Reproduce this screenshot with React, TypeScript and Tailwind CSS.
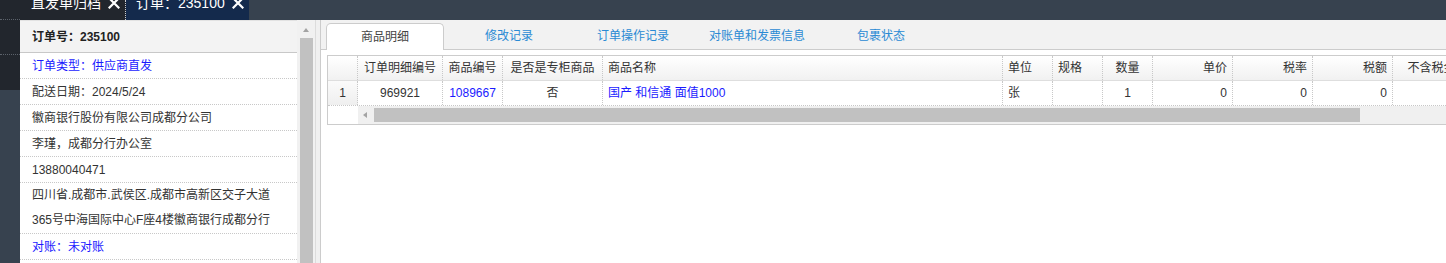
import React from 'react';

type Col = {
  w: string;
  title: string;
  head: string;
  cell: string;
  value: string;
  blue?: boolean;
};

const columns: Col[] = [
  { w: 'w-[85px]', title: '订单明细编号', head: 'justify-center', cell: 'justify-center', value: '969921' },
  { w: 'w-[60px]', title: '商品编号', head: 'justify-center', cell: 'justify-center', value: '1089667', blue: true },
  { w: 'w-[100px]', title: '是否是专柜商品', head: 'justify-center', cell: 'justify-center', value: '否' },
  { w: 'w-[400px]', title: '商品名称', head: 'justify-start', cell: 'justify-start', value: '国产 和信通 面值1000', blue: true },
  { w: 'w-[50px]', title: '单位', head: 'justify-start', cell: 'justify-start', value: '张' },
  { w: 'w-[50px]', title: '规格', head: 'justify-start', cell: 'justify-start', value: '' },
  { w: 'w-[50px]', title: '数量', head: 'justify-center', cell: 'justify-center', value: '1' },
  { w: 'w-[80px]', title: '单价', head: 'justify-end', cell: 'justify-end', value: '0' },
  { w: 'w-[80px]', title: '税率', head: 'justify-end', cell: 'justify-end', value: '0' },
  { w: 'w-[80px]', title: '税额', head: 'justify-end', cell: 'justify-end', value: '0' },
  { w: 'w-[90px]', title: '不含税金额', head: 'justify-center', cell: 'justify-end', value: '0' },
];

const tabs = ['商品明细', '修改记录', '订单操作记录', '对账单和发票信息', '包裹状态'];

const CloseIcon = () => (
  <svg width="12" height="12" viewBox="0 0 12 12" className="ml-[7px]">
    <path d="M1.5 1.5 L10.5 10.5 M10.5 1.5 L1.5 10.5" stroke="white" strokeWidth="2.2" strokeLinecap="square" />
  </svg>
);

export default function App() {
  return (
    <div className="w-[1446px] h-[263px] overflow-hidden flex bg-[#37424f] font-['Liberation_Sans','Noto_Sans_CJK_SC',sans-serif] text-[12px] text-[#333]">
      {/* side menu strip */}
      <div className="w-[20px] shrink-0 flex flex-col">
        <div className="h-[90px] bg-[#22262d] flex flex-col">
          <div className="h-[20px] border-b border-dotted border-[#5c626b]" />
          <div className="h-[35px] border-b border-dotted border-[#5c626b]" />
        </div>
      </div>

      <div className="flex-1 min-w-0 flex flex-col">
        {/* top tabs */}
        <div className="h-[20px] shrink-0 flex overflow-hidden text-white text-[14px] leading-[20px]">
          <div className="w-[106px] bg-[#22262d] border-r border-dotted border-[#c9ccd2] pl-[11px]">
            <div className="-mt-[7px] flex items-center whitespace-nowrap">
              直发单归档
              <CloseIcon />
            </div>
          </div>
          <div className="w-[123px] bg-[#142a4c] pl-[10px]">
            <div className="-mt-[7px] flex items-center whitespace-nowrap">
              订单：235100
              <CloseIcon />
            </div>
          </div>
        </div>

        <div className="flex h-[243px]">
          {/* left info panel */}
          <div className="w-[300px] shrink-0 flex bg-white">
            <div className="w-[277px] flex flex-col">
              <div className="h-[33px] shrink-0 bg-[#f3f3f3] border-t border-[#e2e2e2] border-b border-b-[#c8c8c8] pl-[12px] flex items-center font-bold text-[#222]">
                订单号：235100
              </div>
              <div className="h-[26px] shrink-0 border-b border-dotted border-[#c8c8c8] pl-[12px] flex items-center text-[#1a1aff]">订单类型：供应商直发</div>
              <div className="h-[26px] shrink-0 border-b border-dotted border-[#c8c8c8] pl-[12px] flex items-center">配送日期：2024/5/24</div>
              <div className="h-[26px] shrink-0 border-b border-dotted border-[#c8c8c8] pl-[12px] flex items-center">徽商银行股份有限公司成都分公司</div>
              <div className="h-[26px] shrink-0 border-b border-dotted border-[#c8c8c8] pl-[12px] flex items-center">李瑾，成都分行办公室</div>
              <div className="h-[26px] shrink-0 border-b border-dotted border-[#c8c8c8] pl-[12px] flex items-center">13880040471</div>
              <div className="h-[51px] shrink-0 border-b border-dotted border-[#c8c8c8] pl-[12px] flex flex-col whitespace-nowrap">
                <div className="h-[25px] leading-[25px]">四川省.成都市.武侯区.成都市高新区交子大道</div>
                <div className="h-[25px] leading-[25px]">365号中海国际中心F座4楼徽商银行成都分行</div>
              </div>
              <div className="h-[26px] shrink-0 border-b border-dotted border-[#c8c8c8] pl-[12px] flex items-center text-[#1a1aff]">对账：未对账</div>
            </div>
            {/* vertical scrollbar */}
            <div className="w-[18px] bg-[#f1f1f1] flex flex-col items-center">
              <div className="mt-[8px] w-0 h-0 border-x-[3.5px] border-x-transparent border-b-[4px] border-b-[#a3a3a3]" />
              <div className="mt-[6px] w-[13px] flex-1 bg-[#c1c1c1]" />
            </div>
            <div className="w-[5px] bg-[#f0f0f0] border-l border-[#dcdcdc]" />
          </div>

          {/* right panel */}
          <div className="flex-1 min-w-0 overflow-hidden bg-white border-l border-[#cccccc] flex flex-col">
            <div className="h-[30px] shrink-0 bg-[#f2f2f2] border-b border-[#cccccc] flex items-end pl-[5px] gap-[6px]">
              {tabs.map((t, i) =>
                i === 0 ? (
                  <div
                    key={t}
                    className="w-[118px] h-[27px] -mb-[1px] bg-white border border-b-0 border-[#cccccc] rounded-t-[5px] flex items-center justify-center text-[#444]"
                  >
                    {t}
                  </div>
                ) : (
                  <div key={t} className="w-[118px] h-[26px] flex items-center justify-center text-[#2a8ad4]">
                    {t}
                  </div>
                )
              )}
            </div>

            {/* grid */}
            <div className="mt-[5px] ml-[6px] w-[1400px] border border-[#cccccc] flex flex-col">
              <div className="h-[25px] flex border-b border-[#dedede] bg-linear-to-b from-white to-[#f1f1f1]">
                <div className="w-[30px] shrink-0 border-r border-dotted border-[#c8c8c8]" />
                {columns.map((c) => (
                  <div key={c.title} className={`${c.w} shrink-0 border-r border-dotted border-[#c8c8c8] px-[5px] flex items-center whitespace-nowrap ${c.head}`}>
                    {c.title}
                  </div>
                ))}
              </div>
              <div className="h-[25px] flex border-b border-dotted border-[#c8c8c8]">
                <div className="w-[30px] shrink-0 border-r border-dotted border-[#c8c8c8] bg-linear-to-b from-[#fbfbfb] to-[#efefef] flex items-center justify-center">
                  1
                </div>
                {columns.map((c) => (
                  <div
                    key={c.title}
                    className={`${c.w} shrink-0 border-r border-dotted border-[#c8c8c8] px-[5px] flex items-center whitespace-nowrap ${c.cell} ${c.blue ? 'text-[#1a1aff]' : ''}`}
                  >
                    {c.value}
                  </div>
                ))}
              </div>
              <div className="h-[18px] flex">
                <div className="w-[30px] shrink-0 bg-white" />
                <div className="flex-1 bg-[#f0f0f0] flex items-center pl-[5px]">
                  <div className="w-0 h-0 border-y-[3.5px] border-y-transparent border-r-[4px] border-r-[#a3a3a3]" />
                  <div className="ml-[7px] w-[986px] h-[14px] bg-[#c1c1c1]" />
                </div>
              </div>
            </div>
          </div>
        </div>
      </div>
    </div>
  );
}
